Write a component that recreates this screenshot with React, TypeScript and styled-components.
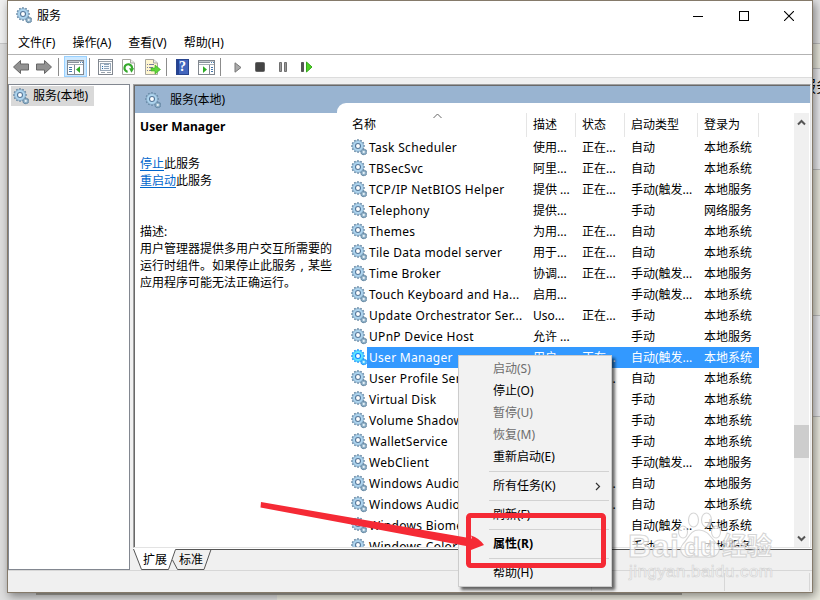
import React from "react";
import styled, { createGlobalStyle } from "styled-components";

const ui = `"Noto Sans", "Noto Sans CJK SC", sans-serif`;

const GlobalStyle = createGlobalStyle`
  * { box-sizing: border-box; }
  body { margin: 0; overflow: hidden; background: #d9d9d7; font: 12px/16px ${ui}; color: #000; }
`;

const Desktop = styled.div`
  position: relative;
  width: 820px;
  height: 600px;
  padding-left: 7px;
  overflow: hidden;
  background:
    linear-gradient(#a9a79f, #a9a79f) 36px 593px / 646px 2px no-repeat,
    linear-gradient(#f0f0f0 0 43px, #c6c6c6 43px 44px, #dedede 44px) 0 0 / 277px 600px no-repeat,
    linear-gradient(
      #e2e2e3 0 43px, #bdbdbd 43px 44px, #e8e7dc 44px 68px, #bdbdbd 68px 69px,
      #ebebee 69px 169px, #bdbdbd 169px 170px, #e8e7dc 170px 315px, #bdbdbd 315px 316px,
      #ebebee 316px 416px, #bdbdbd 416px 417px, #ecebe0 417px
    );
`;

const BehindText = styled.span`
  position: absolute;
  left: 800px;
  top: 76px;
  font-size: 16px;
  line-height: 20px;
  white-space: nowrap;
`;

const Window = styled.main`
  position: relative;
  width: 806px;
  height: 593px;
  border: 1px solid #857a6a;
  background: #f0f0f0;
  display: flex;
  flex-direction: column;
  box-shadow: 2px 3px 9px rgba(0, 0, 0, 0.45);
`;

const TitleBar = styled.header`
  height: 29px;
  display: flex;
  align-items: center;
  background: #fff;
  padding-left: 8px;
`;
const Title = styled.span`
  flex: 1;
  padding-left: 4px;
`;
const WindowButton = styled.button`
  width: 45.5px;
  height: 29px;
  padding: 0;
  border: 0;
  background: none;
  display: grid;
  place-items: center;
`;

const MenuBar = styled.nav`
  height: 24px;
  display: flex;
  gap: 17px;
  align-items: center;
  padding: 1px 0 0 10px;
  background: #fff;
`;

const Toolbar = styled.div`
  height: 24px;
  flex: none;
  display: flex;
  align-items: center;
  background: #fff;
  border-top: 1px solid #b3b3b3;
  border-bottom: 1px solid #dcdcdc;
  padding: 1px 0 0 4px;
`;
const Tool = styled.span<{ $w: number; $active?: boolean }>`
  width: ${(p) => p.$w}px;
  height: 21px;
  display: grid;
  place-items: center;
  padding-top: 1px;
  background: ${(p) => (p.$active ? "#cce8ff" : "transparent")};
  border: ${(p) => (p.$active ? "1px solid #99d1ff" : "0")};
`;
const ToolDivider = styled.i<{ $l: number; $r: number }>`
  width: 1px;
  height: 18px;
  background: #8c8c8c;
  margin: 0 ${(p) => p.$r}px 0 ${(p) => p.$l}px;
`;

const Body = styled.div`
  height: 486px;
  margin-top: 6px;
  display: flex;
  gap: 3px;
`;
const Tree = styled.aside`
  width: 122px;
  border: 1px solid #828790;
  background: #fff;
  padding: 1px 2px;
`;
const TreeItem = styled.div`
  width: 83px;
  height: 20px;
  display: flex;
  align-items: center;
  gap: 3px;
  padding-left: 2px;
  background: #d9d9d9;
`;

const Right = styled.section`
  width: 679px;
  display: flex;
  flex-direction: column;
`;
const Panel = styled.div`
  width: 678px;
  height: 464px;
  border: 1px solid #a0a0a0;
  border-right-color: #e3e3e3;
  border-bottom-color: #e3e3e3;
  box-shadow: inset 1px 1px #696969;
  padding: 1px 0 0 1px;
  background: #fff;
  display: flex;
  flex-direction: column;
`;
const PanelHeader = styled.div`
  height: 27px;
  flex: none;
  display: flex;
  align-items: center;
  gap: 8px;
  padding: 1px 0 0 10px;
  background: #99b4d1;
`;
const PanelBody = styled.div`
  flex: 1;
  min-height: 0;
  display: flex;
`;
const Details = styled.div`
  width: 202px;
  padding: 5px 4px 0 5px;
  line-height: 17px;
`;
const Heading = styled.h1`
  margin: 0 0 20px;
  font-size: 12px;
  line-height: 17px;
  letter-spacing: 0.1px;
`;
const Link = styled.a`
  color: #0066cc;
  text-decoration: underline;
  text-underline-offset: 2px;
`;
const Description = styled.p` margin: 34px -4px 0 0; `;
const Comma = styled.span`
  display: inline-block;
  width: 12px;
  text-align: center;
`;

const List = styled.div`
  width: 473px;
  height: 444px;
  margin-top: -10px;
  padding: 10px 0 0 14px;
  border-top-left-radius: 9px;
  background: #fff;
  display: flex;
  overflow: hidden;
`;
const Table = styled.div`
  width: 443px;
  height: 434px;
  overflow: hidden;
`;
const HeadRow = styled.div`
  display: grid;
  grid-template-columns: 176px 49px 49px 73px 61px;
  width: 408px;
  height: 24px;
  position: relative;
`;
const HeadCell = styled.span<{ $first?: boolean }>`
  border-right: 1px solid #e5e5e5;
  padding: 4px 0 0 ${(p) => (p.$first ? 1 : 6)}px;
`;
const SortArrow = styled.svg`
  position: absolute;
  left: 82px;
  top: 0;
`;
const Row = styled.div`
  display: flex;
  height: 21px;
  width: 408px;
`;
const RowCells = styled.div<{ $sel?: boolean }>`
  display: grid;
  grid-template-columns: 159px 49px 49px 73px 62px;
  line-height: 21px;
  background: ${(p) => (p.$sel ? "#3399ff" : "transparent")};
  color: ${(p) => (p.$sel ? "#fff" : "#000")};
`;
const Cell = styled.span<{ $name?: boolean }>`
  padding-left: ${(p) => (p.$name ? 2 : 7)}px;
  letter-spacing: ${(p) => (p.$name ? "0.3px" : "0")};
  white-space: nowrap;
`;
const GearSlot = styled.span<{ $sel?: boolean }>`
  width: 16px;
  height: 21px;
  padding-top: 2px;
  filter: ${(p) => (p.$sel ? "saturate(3.5)" : "none")};
`;

const Scroll = styled.div`
  width: 15px;
  height: 434px;
  background: #f0f0f0;
  display: flex;
  flex-direction: column;
  align-items: center;
`;
const ScrollArrow = styled.span`
  height: 18px;
  display: grid;
  place-items: center;
`;
const Thumb = styled.i`
  width: 15px;
  height: 33px;
  margin: 294px 0 71px;
  background: #cdcdcd;
`;

const TabStrip = styled.div`
  height: 22px;
  position: relative;
`;
const TabShape = styled.svg`
  position: absolute;
  left: 0;
  top: 0;
`;
const TabLabels = styled.div`
  position: relative;
  display: flex;
  gap: 12px;
  padding: 4px 0 0 10px;
`;
const StatusBar = styled.footer`
  height: 22px;
  display: flex;
  justify-content: flex-end;
  border-top: 1px solid #d7d7d7;
`;
const StatusCell = styled.i<{ $w: number }>`
  width: ${(p) => p.$w}px;
  margin-top: 2px;
  height: 18px;
  border-left: 1px solid #d7d7d7;
`;

const ContextMenu = styled.div`
  position: absolute;
  left: 458px;
  top: 355px;
  width: 154px;
  height: 232px;
  padding: 2px;
  border: 1px solid #ccc;
  background: #f2f2f2;
  box-shadow: 3px 3px 3px rgba(0, 0, 0, 0.6);
`;
const MenuItem = styled.div<{ $disabled?: boolean; $bold?: boolean }>`
  height: 22px;
  padding: 0 8px 0 32px;
  display: flex;
  align-items: center;
  justify-content: space-between;
  color: ${(p) => (p.$disabled ? "#6d6d6d" : "#000")};
  font-weight: ${(p) => (p.$bold ? 700 : 400)};
`;
const MenuLine = styled.div`
  height: 1px;
  margin: 3px 0 3px 28px;
  background: #d2d2d2;
`;

const Overlay = styled.svg`
  position: absolute;
  inset: 0;
  pointer-events: none;
`;

const teeth = [0, 30, 60, 90, 120, 150, 180, 210, 240, 270, 300, 330];
const Gear = () => (
  <svg width="17" height="17" viewBox="0 0 17 17">
    <g fill="#6688a4">
      {teeth.map((a) => (
        <rect key={a} x="6.1" y="0.2" width="1.7" height="3" transform={`rotate(${a} 7 7)`} />
      ))}
      {teeth.map((a) => (
        <rect key={a} x="12.2" y="9.7" width="1" height="6.4" transform={`rotate(${a} 12.7 12.9)`} />
      ))}
    </g>
    <circle cx="7" cy="7" r="4.1" fill="#f4f8fb" stroke="#add4ee" strokeWidth="2.9" />
    <circle cx="7" cy="7" r="5.5" fill="none" stroke="#7c9fbc" strokeWidth="0.7" />
    <circle cx="7" cy="7" r="2.5" fill="#fff" stroke="#54779a" strokeWidth="1.1" />
    <circle cx="12.7" cy="12.9" r="1.7" fill="#e6f1f7" stroke="#8fb1c8" strokeWidth="1.1" />
  </svg>
);

const Arrow = ({ flip }: { flip?: boolean }) => (
  <svg width="18" height="16" viewBox="0 0 18 16">
    <path
      transform={flip ? "translate(18 0) scale(-1 1)" : undefined}
      d="M1.5 8 8.5 1.5V5H16.5V11H8.5V14.5Z"
      fill="#929292"
      stroke="#666"
    />
  </svg>
);

const PaneIcon = ({ right }: { right?: boolean }) => (
  <svg width="17" height="15" viewBox="0 0 17 15" shapeRendering="crispEdges">
    <rect x=".5" y=".5" width="16" height="14" fill="#fff" stroke="#81878f" />
    <path d="M1 1.5H16" stroke="#c3c9cf" />
    <path d="M1 2.5H12" stroke="#89929c" />
    <path d="M13 2.5H16" stroke="#477fb5" strokeDasharray="1 1" />
    <path d="M1 4.5H16" stroke="#a5adb5" />
    <path d={right ? "M11.5 5V14" : "M7.5 5V14"} stroke="#81878f" />
    <path d={right ? "M13 7.5H15M13 9.5H15M13 11.5H15" : "M2 7.5H5M2 9.5H5M2 11.5H5"} stroke="#4677aa" />
    <path shapeRendering="auto" d={right ? "M5 6.2V13L9 9.6Z" : "M13 6.2V13L9 9.6Z"} fill="#2eac25" />
  </svg>
);

const PropertiesIcon = () => (
  <svg width="15" height="16" viewBox="0 0 15 16" shapeRendering="crispEdges">
    <rect x=".5" y=".5" width="14" height="15" fill="#fff" stroke="#81878f" />
    <path d="M1 2.5H14M3 13.5H7M9 13.5H13" stroke="#9aa3ac" />
    <rect x="2.5" y="4.5" width="10" height="7" fill="#f4f8fc" stroke="#98a7b7" />
    <path d="M4 7.5H5M4 9.5H5" stroke="#256dab" />
    <path d="M6 7.5H11M6 9.5H11M6 5.5H11" stroke="#8ba3ba" />
  </svg>
);

const Page = ({ exportIcon }: { exportIcon?: boolean }) => (
  <svg width="17" height="16" viewBox="0 0 17 16">
    <path d="M1.5.5H9.5L13.5 4V15.5H1.5Z" fill={exportIcon ? "#fff6cf" : "#fff"} stroke="#a7a7a0" />
    <path d="M9.5.5V4H13.5" fill="#eee" stroke="#a7a7a0" />
    {exportIcon ? (
      <>
        <path d="M3 5.5H4M5 5.5H10M3 8.5H4M5 8.5H9M3 11.5H4M5 11.5H9" stroke="#777ba2" />
        <path d="M7 9H11V6L16.5 10.5 11 15V12H7Z" fill="#60d53a" stroke="#36ac20" strokeWidth=".6" />
      </>
    ) : (
      <>
        <path d="M6.6 12.8A3.8 3.8 0 1 1 11 9.8" fill="none" stroke="#35a92b" strokeWidth="2.2" />
        <path d="M8 9.3H13.2L10.5 13.8Z" fill="#35a92b" />
      </>
    )}
  </svg>
);

const HelpIcon = styled.span`
  width: 13px;
  height: 16px;
  background: linear-gradient(90deg, #244394 2px, #4366bd 2px);
  border: 1px solid #29458e;
  color: #fff;
  font: bold 14px/14px "Liberation Serif", serif;
  text-align: center;
`;

const chevron = { fill: "none", stroke: "#555", strokeWidth: 2 };

type Service = [string, string, string, string, string];
const services: Service[] = [
  ["Task Scheduler", "使用...", "正在...", "自动", "本地系统"],
  ["TBSecSvc", "阿里...", "正在...", "自动", "本地系统"],
  ["TCP/IP NetBIOS Helper", "提供 ...", "正在...", "手动(触发...", "本地服务"],
  ["Telephony", "提供...", "", "手动", "网络服务"],
  ["Themes", "为用...", "正在...", "自动", "本地系统"],
  ["Tile Data model server", "用于...", "正在...", "自动", "本地系统"],
  ["Time Broker", "协调...", "正在...", "手动(触发...", "本地服务"],
  ["Touch Keyboard and Ha...", "启用...", "", "手动(触发...", "本地系统"],
  ["Update Orchestrator Ser...", "Uso...", "正在...", "手动", "本地系统"],
  ["UPnP Device Host", "允许 ...", "", "手动", "本地服务"],
  ["User Manager", "用户...", "正在...", "自动(触发...", "本地系统"],
  ["User Profile Service", "此服...", "正在...", "自动", "本地系统"],
  ["Virtual Disk", "提供...", "", "手动", "本地系统"],
  ["Volume Shadow Copy", "管理...", "", "手动", "本地系统"],
  ["WalletService", "电子...", "", "手动", "本地系统"],
  ["WebClient", "使基...", "", "手动(触发...", "本地服务"],
  ["Windows Audio", "管理...", "正在...", "自动", "本地服务"],
  ["Windows Audio Endpoint", "管理...", "正在...", "自动", "本地系统"],
  ["Windows Biometric", "Win...", "", "自动(触发...", "本地系统"],
  ["Windows Color System", "Wcs...", "", "手动", "本地服务"],
];

export default function App() {
  return (
    <Desktop>
      <GlobalStyle />
      <BehindText>服务</BehindText>
      <Window>
        <TitleBar>
          <Gear />
          <Title>服务</Title>
          <WindowButton><svg width="10" height="10"><path d="M0 5.5H10" stroke="#000" /></svg></WindowButton>
          <WindowButton><svg width="10" height="10"><rect x=".5" y=".5" width="9" height="9" fill="none" stroke="#000" /></svg></WindowButton>
          <WindowButton><svg width="10" height="10"><path d="M0 0 10 10M10 0 0 10" stroke="#000" strokeWidth="1.1" /></svg></WindowButton>
        </TitleBar>
        <MenuBar>
          <span>文件(F)</span><span>操作(A)</span><span>查看(V)</span><span>帮助(H)</span>
        </MenuBar>
        <Toolbar>
          <Tool $w={18}><Arrow /></Tool>
          <Tool $w={27}><Arrow flip /></Tool>
          <ToolDivider $l={1} $r={5} />
          <Tool $w={23} $active><PaneIcon /></Tool>
          <ToolDivider $l={2} $r={3} />
          <Tool $w={24}><PropertiesIcon /></Tool>
          <Tool $w={25}><Page /></Tool>
          <Tool $w={21}><Page exportIcon /></Tool>
          <ToolDivider $l={3} $r={4} />
          <Tool $w={23}><HelpIcon>?</HelpIcon></Tool>
          <Tool $w={24}><PaneIcon right /></Tool>
          <ToolDivider $l={2} $r={6} />
          <Tool $w={22}><svg width="8" height="11"><path d="M1 .8V10.2L7 5.5Z" fill="#aaa" stroke="#777" /></svg></Tool>
          <Tool $w={22}><svg width="10" height="10"><rect x=".5" y=".5" width="9" height="9" rx="1" fill="#444" stroke="#666" /></svg></Tool>
          <Tool $w={24}><svg width="8" height="10"><path d="M.5.5H2.5V9.5H.5ZM5.5.5H7.5V9.5H5.5Z" fill="#999" stroke="#707070" /></svg></Tool>
          <Tool $w={24}><svg width="12" height="12"><path d="M.5 1.5H2.5V10.5H.5Z" fill="#555" stroke="#555" /><path d="M5.5 1V11L11 6Z" fill="#4fd425" stroke="#36aa1c" /></svg></Tool>
        </Toolbar>
        <Body>
          <Tree><TreeItem><Gear /><span>服务(本地)</span></TreeItem></Tree>
          <Right>
            <Panel>
              <PanelHeader><Gear /><span>服务(本地)</span></PanelHeader>
              <PanelBody>
                <Details>
                  <Heading>User Manager</Heading>
                  <div><Link>停止</Link>此服务</div>
                  <div><Link>重启动</Link>此服务</div>
                  <Description>描述:<br />用户管理器提供多用户交互所需要的<br />运行时组件。如果停止此服务<Comma>,</Comma>某些<br />应用程序可能无法正确运行。</Description>
                </Details>
                <List>
                  <Table>
                    <HeadRow>
                      <HeadCell $first>名称</HeadCell>
                      <HeadCell>描述</HeadCell>
                      <HeadCell>状态</HeadCell>
                      <HeadCell>启动类型</HeadCell>
                      <HeadCell>登录为</HeadCell>
                      <SortArrow width="9" height="6"><path d="M.5 5 4.5 1 8.5 5" fill="none" stroke="#666" /></SortArrow>
                    </HeadRow>
                    {services.map((s, i) => (
                      <Row key={s[0]}>
                        <GearSlot $sel={i === 10}><Gear /></GearSlot>
                        <RowCells $sel={i === 10}>
                          {s.map((text, c) => <Cell key={c} $name={c === 0}>{text}</Cell>)}
                        </RowCells>
                      </Row>
                    ))}
                  </Table>
                  <Scroll>
                    <ScrollArrow><svg width="9" height="7"><path d="M1 5.5 4.5 2 8 5.5" {...chevron} /></svg></ScrollArrow>
                    <Thumb />
                    <ScrollArrow><svg width="9" height="7"><path d="M1 1.5 4.5 5 8 1.5" {...chevron} /></svg></ScrollArrow>
                  </Scroll>
                </List>
              </PanelBody>
            </Panel>
            <TabStrip>
              <TabShape width="679" height="22">
                <path d="M0 0H679V1.5H0Z" fill="#fff" />
                <path d="M.5 1 8.5 21.5H35.5L43.5 1Z" fill="#fff" />
                <path d="M.5 1 8.5 21.5H35.5L42.5 1.5H679M39.5 12 44.5 21.5H71L78 1.5" fill="none" stroke="#555" />
              </TabShape>
              <TabLabels><span>扩展</span><span>标准</span></TabLabels>
            </TabStrip>
          </Right>
        </Body>
        <StatusBar><StatusCell $w={133} /><StatusCell $w={85} /><StatusCell $w={3} /></StatusBar>
      </Window>
      <ContextMenu>
        <MenuItem $disabled>启动(S)</MenuItem>
        <MenuItem>停止(O)</MenuItem>
        <MenuItem $disabled>暂停(U)</MenuItem>
        <MenuItem $disabled>恢复(M)</MenuItem>
        <MenuItem>重新启动(E)</MenuItem>
        <MenuLine />
        <MenuItem>所有任务(K)<svg width="6" height="9"><path d="M1 1 4.5 4.5 1 8" fill="none" stroke="#333" strokeWidth="1.2" /></svg></MenuItem>
        <MenuLine />
        <MenuItem>刷新(F)</MenuItem>
        <MenuLine />
        <MenuItem $bold>属性(R)</MenuItem>
        <MenuLine />
        <MenuItem>帮助(H)</MenuItem>
      </ContextMenu>
      <Overlay width="820" height="600">
        <rect x="468.5" y="515.5" width="135" height="50" rx="2" fill="none" stroke="#f52a35" strokeWidth="5" />
        <path d="M261 502 472 538.5 471 535.5Q479 538 484 545L471 550 466 546 260.5 507.5Z" fill="#f52a35" />
        <g fill="#fff" fillOpacity=".72" stroke="#c8c8c8" strokeOpacity=".75" strokeWidth="1.1">
          <ellipse cx="683" cy="532" rx="4.5" ry="6" />
          <ellipse cx="693.5" cy="520" rx="5" ry="7" />
          <ellipse cx="706.5" cy="520" rx="5" ry="7" />
          <ellipse cx="716" cy="532" rx="4.5" ry="6" />
          <path d="M699 530C690 530 689 538 683 544 677 551 684 559 692 557H706C718 559 723 549 716 543 710 536 707 530 699 530Z" />
          <g fontFamily="Liberation Sans, sans-serif" fontWeight="bold">
            <text x="628" y="557" fontSize="32" textLength="51">Bai</text>
            <text x="684" y="556" fontSize="26" textLength="32">du</text>
            <text x="722" y="555" fontSize="25" textLength="50" fontFamily="Noto Sans CJK SC, sans-serif">经验</text>
          </g>
          <text x="629" y="577" fontSize="17" textLength="144" strokeWidth=".7" fontFamily="Liberation Sans, sans-serif">jingyan.baidu.com</text>
        </g>
      </Overlay>
    </Desktop>
  );
}
